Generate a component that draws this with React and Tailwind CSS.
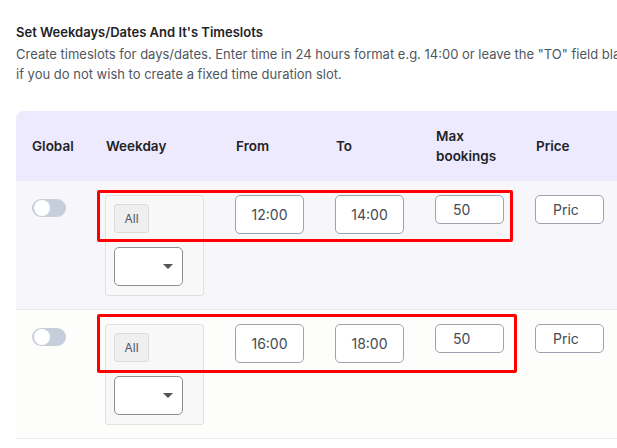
import React from 'react'

const cols = 'grid grid-cols-[74px_130px_100px_100px_100px_100px_100px]'

function Toggle() {
  return (
    <div className="mt-[2px] ml-[1px] w-[34px] h-[18px] rounded-full bg-[#c5cedb] relative">
      <div className="absolute left-[2px] top-[1px] w-[16px] h-[16px] rounded-full bg-white" />
    </div>
  )
}

function Field({ value, tall, center }) {
  return (
    <div
      className={`w-[69px] ${tall ? 'h-[39px]' : 'h-[29px]'} rounded-[5px] border border-[#9ca3af] bg-white flex items-center text-[14px] text-[#444b52] ${
        center ? 'justify-center' : 'pl-[17px]'
      }`}
    >
      {value}
    </div>
  )
}

function Row({ from, to, bg, mark }) {
  return (
    <div className={`${cols} relative h-[129px] pt-[14px] border-b border-[#ececec] ${bg}`}>
      <div className="pl-[15px] pt-[2px]">
        <Toggle />
      </div>
      <div className="pl-[15px]">
        <div className="w-[99px] h-[101px] rounded-[3px] border border-[#e0e0e0] bg-[#f8f8f8] pt-[8px] pl-[8px]">
          <div className="w-[35px] h-[29px] rounded-[3px] border border-[#dcdcdc] bg-[#efefef] flex items-center justify-center text-[12px] text-[#50575e]">
            All
          </div>
          <div className="mt-[14px] w-[69px] h-[39px] rounded-[5px] border border-[#8c8f94] bg-white relative">
            <svg className="absolute left-[47px] top-[15px]" width="12" height="7" viewBox="0 0 12 7">
              <path d="M1 1h10L6 6z" fill="#555" />
            </svg>
          </div>
        </div>
      </div>
      <div className="pl-[15px]">
        <Field value={from} tall center />
      </div>
      <div className="pl-[15px]">
        <Field value={to} tall center />
      </div>
      <div className="pl-[15px]">
        <Field value="50" />
      </div>
      <div className="pl-[15px]">
        <Field value="Pric" />
      </div>
      <div />
      <div className={`absolute left-[81px] rounded-[2px] border-[3px] border-[#ff0000] ${mark}`} />
    </div>
  )
}

export default function App() {
  return (
    <div className="w-[617px] h-[448px] overflow-hidden bg-white font-['Inter','Noto_Sans',sans-serif]">
      <div className="w-[720px] pl-[16px] pt-[22px]">
        <h2 className="text-[13px] font-semibold text-[#1d2327] leading-[20px]">
          Set Weekdays/Dates And It's Timeslots
        </h2>
        <p className="mt-[2px] text-[13px] leading-[20px] text-[#50575e] whitespace-nowrap">
          Create timeslots for days/dates. Enter time in 24 hours format e.g. 14:00 or leave the "TO" field blank
          <br />
          if you do not wish to create a fixed time duration slot.
        </p>
        <div className="mt-[27px]">
          <div className={`${cols} h-[70px] items-center rounded-tl-[8px] bg-[#eeeafe] text-[13.5px] font-semibold text-[#1d2327] leading-[20px]`}>
            <div className="pl-[16px]">Global</div>
            <div className="pl-[16px]">Weekday</div>
            <div className="pl-[16px]">From</div>
            <div className="pl-[16px]">To</div>
            <div className="pl-[16px] pr-[10px]">Max bookings</div>
            <div className="pl-[16px]">Price</div>
            <div />
          </div>
          <Row from="12:00" to="14:00" bg="bg-[#f6f6fb]" mark="top-[9px] w-[416px] h-[52px]" />
          <Row from="16:00" to="18:00" bg="bg-[#fdfdfb]" mark="top-[4px] w-[420px] h-[59px]" />
        </div>
      </div>
    </div>
  )
}
